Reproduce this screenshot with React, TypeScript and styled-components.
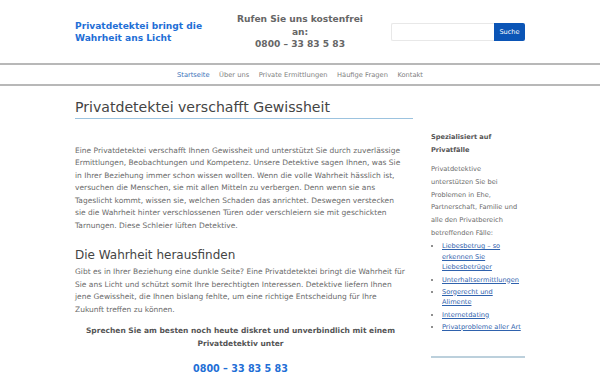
import React from "react";
import styled, { createGlobalStyle } from "styled-components";

const GlobalStyle = createGlobalStyle`
  body {
    margin: 0;
    background: #ffffff;
    font-family: "DejaVu Sans", Verdana, sans-serif;
    color: #666666;
  }
`;

const navItems = ["Startseite", "Über uns", "Private Ermittlungen", "Häufige Fragen", "Kontakt"];

const sideLinks = [
  "Liebesbetrug – so erkennen Sie Liebesbetrüger",
  "Unterhaltsermittlungen",
  "Sorgerecht und Alimente",
  "Internetdating",
  "Privatprobleme aller Art",
];

function App() {
  return (
    <Page>
      <GlobalStyle />
      <Header>
        <Logo href="#">Privatdetektei bringt die Wahrheit ans Licht</Logo>
        <Hotline>
          Rufen Sie uns kostenfrei an:
          <br />
          0800 – 33 83 5 83
        </Hotline>
        <SearchForm onSubmit={(e) => e.preventDefault()}>
          <SearchInput type="text" />
          <SearchButton type="submit">Suche</SearchButton>
        </SearchForm>
      </Header>
      <Nav>
        {navItems.map((item, i) => (
          <NavLink key={item} href="#" $active={i === 0}>
            {item}
          </NavLink>
        ))}
      </Nav>
      <Wrapper>
        <Main>
          <Title>Privatdetektei verschafft Gewissheit</Title>
          <Text>
            Eine Privatdetektei verschafft Ihnen Gewissheit und unterstützt Sie durch zuverlässige
            Ermittlungen, Beobachtungen und Kompetenz. Unsere Detektive sagen Ihnen, was Sie in Ihrer
            Beziehung immer schon wissen wollten. Wenn die volle Wahrheit hässlich ist, versuchen die
            Menschen, sie mit allen Mitteln zu verbergen. Denn wenn sie ans Tageslicht kommt, wissen sie,
            welchen Schaden das anrichtet. Deswegen verstecken sie die Wahrheit hinter verschlossenen
            Türen oder verschleiern sie mit geschickten Tarnungen. Diese Schleier lüften Detektive.
          </Text>
          <SubTitle>Die Wahrheit herausfinden</SubTitle>
          <Text>
            Gibt es in Ihrer Beziehung eine dunkle Seite? Eine Privatdetektei bringt die Wahrheit für Sie
            ans Licht und schützt somit Ihre berechtigten Interessen. Detektive liefern Ihnen jene
            Gewissheit, die Ihnen bislang fehlte, um eine richtige Entscheidung für Ihre Zukunft treffen
            zu können.
          </Text>
          <CallOut>
            Sprechen Sie am besten noch heute diskret und unverbindlich mit einem Privatdetektiv unter
          </CallOut>
          <Phone href="#">0800 – 33 83 5 83</Phone>
        </Main>
        <Sidebar>
          <SideTitle>Spezialisiert auf Privatfälle</SideTitle>
          <SideText>
            Privatdetektive unterstützen Sie bei Problemen in Ehe, Partnerschaft, Familie und alle den
            Privatbereich betreffenden Fälle:
          </SideText>
          <SideList>
            {sideLinks.map((l) => (
              <SideItem key={l}>
                <SideLink href="#">{l}</SideLink>
              </SideItem>
            ))}
          </SideList>
          <SideRule />
        </Sidebar>
      </Wrapper>
    </Page>
  );
}

const Page = styled.div`
  width: 600px;
  height: 375px;
  overflow: hidden;
`;

const Header = styled.header`
  width: 450px;
  margin: 0 auto;
  height: 63px;
  display: grid;
  grid-template-columns: 155px 1fr 155px;
  align-items: center;
`;

const Logo = styled.a`
  font-size: 9.1px;
  font-weight: bold;
  line-height: 12px;
  color: #1f6fd6;
  text-decoration: none;
  width: 140px;
  margin-top: 1px;
`;

const Hotline = styled.div`
  justify-self: center;
  width: 136px;
  font-size: 9.1px;
  font-weight: bold;
  line-height: 12.7px;
  color: #666666;
  text-align: center;
  margin-top: 1px;
`;

const SearchForm = styled.form`
  display: flex;
  justify-content: flex-end;
  margin-top: 1px;
`;

const SearchInput = styled.input`
  width: 103px;
  height: 18px;
  box-sizing: border-box;
  border: 1px solid #e8e8e8;
  border-right: none;
  border-radius: 2px 0 0 2px;
  padding: 0 4px;
  outline: none;
`;

const SearchButton = styled.button`
  height: 18px;
  width: 31px;
  border: none;
  border-radius: 0 2px 2px 0;
  background: #0b55b6;
  color: #ffffff;
  font-family: "DejaVu Sans", sans-serif;
  font-size: 6.6px;
  padding: 0;
`;

const Nav = styled.nav`
  border-top: 2px solid #b8b8b8;
  border-bottom: 2px solid #b8b8b8;
  height: 19px;
  display: flex;
  justify-content: center;
  align-items: center;
  gap: 9.5px;
`;

const NavLink = styled.a<{ $active?: boolean }>`
  font-size: 6.7px;
  color: ${(p) => (p.$active ? "#3a70b8" : "#808080")};
  text-decoration: none;
`;

const Wrapper = styled.div`
  width: 450px;
  margin: 0 auto;
  display: grid;
  grid-template-columns: 338px 94px;
  column-gap: 18px;
  align-items: start;
`;

const Main = styled.main`
  padding-top: 11px;
`;

const Title = styled.h1`
  margin: 0;
  font-size: 14.1px;
  font-weight: normal;
  color: #444444;
  line-height: 20px;
  padding-bottom: 1px;
  border-bottom: 1px solid #9cc3df;
`;

const Text = styled.p`
  margin: 0;
  max-width: 331px;
  font-size: 7.5px;
  line-height: 12.5px;
  color: #6a6a6a;

  ${Title} + & {
    margin-top: 25.5px;
  }
`;

const SubTitle = styled.h2`
  margin: 15px 0 3px;
  font-size: 12px;
  font-weight: normal;
  color: #444444;
  line-height: 16px;
`;

const CallOut = styled.p`
  margin: 7.5px 0 0;
  max-width: 331px;
  font-size: 7.5px;
  font-weight: bold;
  line-height: 13.3px;
  color: #555555;
  text-align: center;
`;

const Phone = styled.a`
  display: block;
  max-width: 331px;
  margin-top: 13px;
  line-height: 12px;
  text-align: center;
  font-size: 9.6px;
  font-weight: bold;
  color: #1f6fd6;
  text-decoration: none;
`;

const Sidebar = styled.aside`
  padding-top: 45px;
  padding-right: 4px;
`;

const SideTitle = styled.h3`
  margin: 0;
  font-size: 6.6px;
  font-weight: bold;
  line-height: 12.6px;
  color: #555555;
`;

const SideText = styled.p`
  margin: 7px 0 0;
  font-size: 6.6px;
  line-height: 12.7px;
  color: #6a6a6a;
`;

const SideList = styled.ul`
  margin: 0.5px 0 0;
  padding-left: 11px;
  list-style: disc;
  color: #6a6a6a;
`;

const SideItem = styled.li`
  font-size: 6.6px;
  line-height: 10.7px;
  margin-top: 1.5px;
`;

const SideLink = styled.a`
  color: #2f62ad;
  text-decoration: underline;
`;

const SideRule = styled.div`
  margin-top: 23px;
  margin-right: -4px;
  height: 2px;
  background: #bcd0dc;
`;

export default App;
